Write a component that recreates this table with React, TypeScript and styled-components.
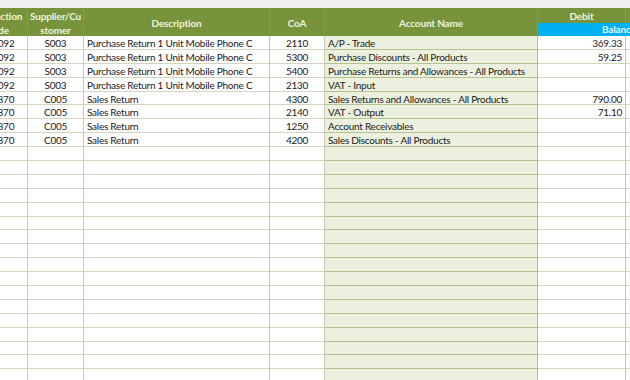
import React from 'react'
import styled, {createGlobalStyle, css} from 'styled-components'

const GlobalStyle = createGlobalStyle`
  html, body {
    margin: 0;
    padding: 0;
    background: #ffffff;
  }
  body {
    font-family: Lato, "Liberation Sans", sans-serif;
    font-size: 10px;
    letter-spacing: -0.25px;
    color: #1a1a1a;
  }
`

const COLS = '60px 56px 186px 55px 213px 88px 60px'
const ROW_H = 13.9

const Page = styled.div`
  width: 630px;
  height: 380px;
  overflow: hidden;
  background: #ffffff;
`

const TopBand = styled.div`
  height: 8px;
  background: #efeff2;
`

const Sheet = styled.div`
  margin-left: -32px;
  width: 720px;
`

const Header = styled.div`
  display: grid;
  grid-template-columns: ${COLS};
  grid-template-rows: 15px 13px;
  background: #77933c;
  color: #eef3dc;
  font-weight: 700;
  font-size: 10px;
  letter-spacing: -0.15px;
`

const HeadCell = styled.div<{$span?: boolean; $col: number}>`
  grid-column: ${p => p.$col};
  grid-row: ${p => (p.$span ? '1 / span 2' : '1')};
  display: flex;
  align-items: center;
  justify-content: center;
  text-align: center;
  line-height: 14px;
  padding-top: 1px;
  border-right: 1px solid rgba(255, 255, 255, 0.1);
`

const Balance = styled.div`
  grid-column: 6 / span 2;
  grid-row: 2;
  background: #00b0f0;
  color: #e8f6fc;
  display: flex;
  align-items: center;
  padding-left: 64px;
  line-height: 13px;
`

const Row = styled.div`
  display: grid;
  grid-template-columns: ${COLS};
  height: ${ROW_H}px;
`

const Cell = styled.div<{$align?: 'left' | 'center' | 'right'; $account?: boolean}>`
  box-sizing: border-box;
  height: ${ROW_H}px;
  border-right: 1px solid #c7cab1;
  border-bottom: 1px solid #d3d5bf;
  padding: 0 3px;
  line-height: 14px;
  white-space: nowrap;
  overflow: hidden;
  text-align: ${p => p.$align ?? 'left'};
  ${p =>
    p.$account &&
    css`
      background: #ebf1de;
      border-bottom-color: #b4c28f;
      border-right-color: #b4c28f;
    `}
`

type Entry = {
  code: string
  party: string
  desc: string
  coa: string
  account: string
  debit: string
}

const entries: Entry[] = [
  {code: 'PR0092', party: 'S003', desc: 'Purchase Return 1 Unit Mobile Phone C', coa: '2110', account: 'A/P - Trade', debit: '369.33'},
  {code: 'PR0092', party: 'S003', desc: 'Purchase Return 1 Unit Mobile Phone C', coa: '5300', account: 'Purchase Discounts - All Products', debit: '59.25'},
  {code: 'PR0092', party: 'S003', desc: 'Purchase Return 1 Unit Mobile Phone C', coa: '5400', account: 'Purchase Returns and Allowances - All Products', debit: ''},
  {code: 'PR0092', party: 'S003', desc: 'Purchase Return 1 Unit Mobile Phone C', coa: '2130', account: 'VAT - Input', debit: ''},
  {code: 'SR0870', party: 'C005', desc: 'Sales Return', coa: '4300', account: 'Sales Returns and Allowances - All Products', debit: '790.00'},
  {code: 'SR0870', party: 'C005', desc: 'Sales Return', coa: '2140', account: 'VAT - Output', debit: '71.10'},
  {code: 'SR0870', party: 'C005', desc: 'Sales Return', coa: '1250', account: 'Account Receivables', debit: ''},
  {code: 'SR0870', party: 'C005', desc: 'Sales Return', coa: '4200', account: 'Sales Discounts - All Products', debit: ''},
]

const EMPTY: Entry = {code: '', party: '', desc: '', coa: '', account: '', debit: ''}
const rows: Entry[] = [...entries, ...Array.from({length: 18}, () => EMPTY)]

export default function App() {
  return (
    <Page>
      <GlobalStyle />
      <TopBand />
      <Sheet>
        <Header>
          <HeadCell $col={1} $span>
            Transaction
            <br />
            Code
          </HeadCell>
          <HeadCell $col={2} $span>
            Supplier/Cu
            <br />
            stomer
          </HeadCell>
          <HeadCell $col={3} $span>Description</HeadCell>
          <HeadCell $col={4} $span>CoA</HeadCell>
          <HeadCell $col={5} $span>Account Name</HeadCell>
          <HeadCell $col={6}>Debit</HeadCell>
          <HeadCell $col={7} />
          <Balance>Balance</Balance>
        </Header>
        {rows.map((r, i) => (
          <Row key={i}>
            <Cell $align="center">{r.code}</Cell>
            <Cell $align="center">{r.party}</Cell>
            <Cell>{r.desc}</Cell>
            <Cell $align="center">{r.coa}</Cell>
            <Cell $account>{r.account}</Cell>
            <Cell $align="right">{r.debit}</Cell>
            <Cell />
          </Row>
        ))}
      </Sheet>
    </Page>
  )
}
